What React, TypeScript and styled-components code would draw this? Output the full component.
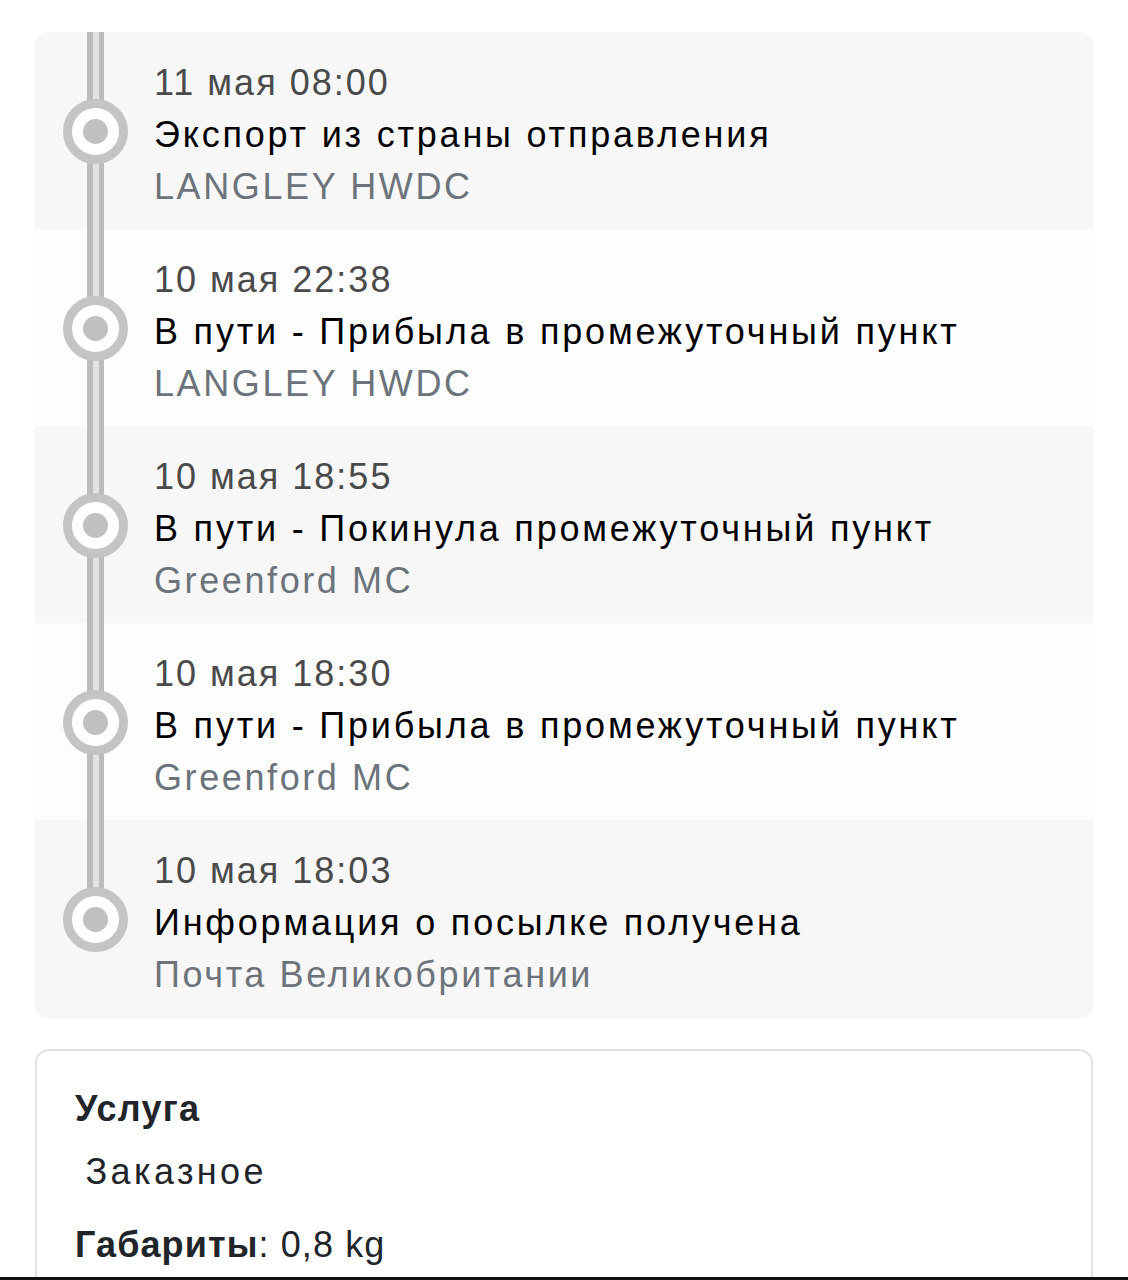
import React from "react";
import styled, { createGlobalStyle } from "styled-components";

const Global = createGlobalStyle`
  html, body { margin: 0; padding: 0; background: #ffffff; }
  body { font-family: "Liberation Sans", Arial, sans-serif; -webkit-font-smoothing: antialiased; }
`;

const Page = styled.div`
  width: 1128px;
  height: 1280px;
  overflow: hidden;
  padding: 32px 35px 0 35px;
  box-sizing: border-box;
  display: flex;
  flex-direction: column;
  gap: 30px;
`;

const Timeline = styled.div`
  background: #f7f7f7;
  border-radius: 14px;
  overflow: hidden;
  display: flex;
  flex-direction: column;
  padding-bottom: 2px;
`;

const Row = styled.div<{ $light: boolean }>`
  height: 197px;
  display: grid;
  grid-template-columns: 119px 1fr;
  background: ${(p) => (p.$light ? "#fdfdfd" : "#f7f7f7")};
`;

const Marker = styled.div<{ $last: boolean }>`
  display: flex;
  justify-content: flex-start;
  padding: 67px 0 0 28px;
  background-image: linear-gradient(
    to right,
    #bcbcbc 0,
    #bcbcbc 5.5px,
    #e3e3e3 5.5px,
    #e3e3e3 11.5px,
    #bcbcbc 11.5px,
    #bcbcbc 17px
  );
  background-repeat: no-repeat;
  background-position: 52px 0;
  background-size: 17px ${(p) => (p.$last ? "72px" : "100%")};
`;

const Ring = styled.div`
  width: 65px;
  height: 65px;
  box-sizing: border-box;
  border-radius: 50%;
  border: 9px solid #c4c4c4;
  background: #ffffff;
  display: flex;
  align-items: center;
  justify-content: center;
`;

const Dot = styled.div`
  width: 25px;
  height: 25px;
  border-radius: 50%;
  background: #c0c0c0;
`;

const Body = styled.div`
  padding-top: 25px;
  display: flex;
  flex-direction: column;
  font-size: 36px;
  line-height: 52px;
  white-space: nowrap;
`;

const When = styled.div`
  color: #4a4a4a;
  letter-spacing: 2px;
`;

const What = styled.div`
  color: #000000;
  letter-spacing: 2.8px;
`;

const Where = styled.div`
  color: #6c737a;
  letter-spacing: 2.6px;
`;

const Card = styled.div`
  border: 2px solid #e2e2e2;
  border-bottom: none;
  border-radius: 14px 14px 0 0;
  padding: 32px 38px 0 38px;
  flex: 1;
  color: #212529;
  font-size: 36px;
`;

const Label = styled.div`
  font-weight: 700;
  line-height: 52px;
  letter-spacing: 1.3px;
`;

const Value = styled.div`
  line-height: 52px;
  margin: 11px 0 0 -3px;
  white-space: pre;
  letter-spacing: 3.4px;
`;

const Line = styled.div`
  line-height: 52px;
  margin-top: 21px;
  letter-spacing: 1.1px;
`;

const Strong = styled.span`
  font-weight: 700;
`;

const BottomEdge = styled.div`
  position: fixed;
  left: 0;
  right: 0;
  bottom: 0;
  height: 3px;
  background: #111111;
`;

const events = [
  { when: "11 мая 08:00", what: "Экспорт из страны отправления", where: "LANGLEY HWDC" },
  { when: "10 мая 22:38", what: "В пути - Прибыла в промежуточный пункт", where: "LANGLEY HWDC" },
  { when: "10 мая 18:55", what: "В пути - Покинула промежуточный пункт", where: "Greenford MC" },
  { when: "10 мая 18:30", what: "В пути - Прибыла в промежуточный пункт", where: "Greenford MC" },
  { when: "10 мая 18:03", what: "Информация о посылке получена", where: "Почта Великобритании" },
];

export default function App() {
  return (
    <Page>
      <Global />
      <Timeline>
        {events.map((e, i) => (
          <Row key={i} $light={i % 2 === 1}>
            <Marker $last={i === events.length - 1}>
              <Ring>
                <Dot />
              </Ring>
            </Marker>
            <Body>
              <When>{e.when}</When>
              <What>{e.what}</What>
              <Where>{e.where}</Where>
            </Body>
          </Row>
        ))}
      </Timeline>
      <Card>
        <Label>Услуга</Label>
        <Value>{" Заказное"}</Value>
        <Line>
          <Strong>Габариты</Strong>: 0,8 kg
        </Line>
      </Card>
      <BottomEdge />
    </Page>
  );
}
